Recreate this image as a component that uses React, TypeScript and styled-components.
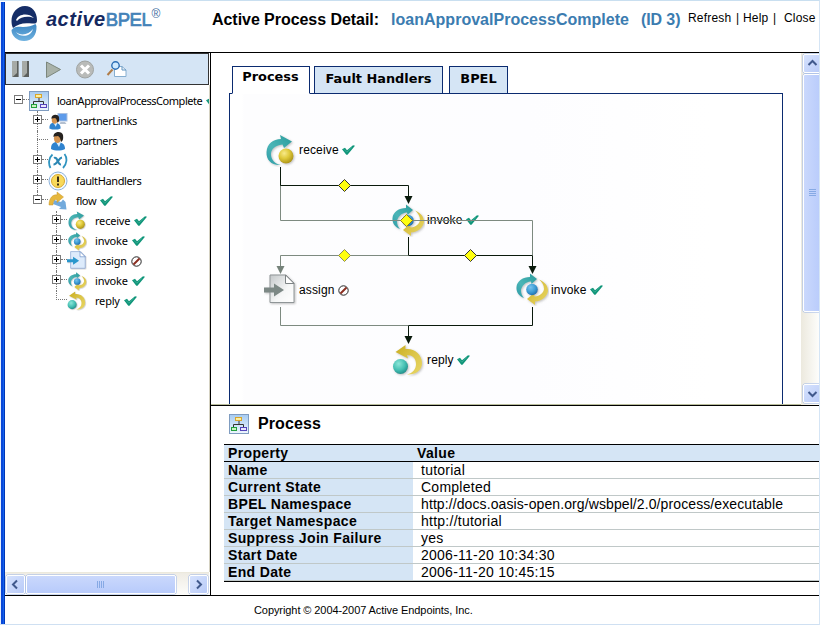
import React from "react";
import styled, { createGlobalStyle, css } from "styled-components";

const Global = createGlobalStyle`
  *, *::before, *::after { box-sizing: border-box; }
  html, body { margin: 0; padding: 0; background: #fff; overflow: hidden; }
  svg { display: block; flex: none; }
`;

const ARIAL = `"Liberation Sans", Arial, sans-serif`;
const PANEL = "#d5e5f5";
const NAVY = "#0b2b70";

const Window = styled.div`
  width: 820px;
  height: 625px;
  display: flex;
  flex-direction: column;
  background: #fff;
  border-top: 1px solid #c9dff0;
  border-bottom: 1px solid #cfe0f2;
  border-right: 1px solid #d5e5f5;
  color: #000;
  font-family: ${ARIAL};
  overflow: hidden;
`;

const Frame = styled.div`
  flex: 1;
  display: flex;
  flex-direction: column;
  min-height: 0;
  border-top: 1px solid #a5b0a8;
  border-left: 5px solid;
  border-image: linear-gradient(90deg, #e4eefb 0 1px, #0a48d8 1px 3px, #1262ee 3px 4px, #0036b8 4px 5px) 0 0 0 5;
`;

const Header = styled.header`
  height: 50px;
  flex: none;
  display: flex;
  align-items: flex-start;
  white-space: pre;
`;

const Logo = styled.div`
  width: 207px;
  display: flex;
  padding: 3px 0 0 5px;
`;

const Brand = styled.div`
  display: flex;
  align-items: flex-start;
  padding: 2px 0 0 6px;
`;

const BrandBold = styled.span`
  font: italic bold 20px/24px ${ARIAL};
  letter-spacing: 0.5px;
  color: #14285f;
`;
const BrandThin = styled.span`
  font-size: 18.5px;
  line-height: 25px;
  color: #4482b8;
  -webkit-text-stroke: 0.7px #4482b8;
  letter-spacing: -0.4px;
`;
const Registered = styled.span`
  font-size: 12px;
  line-height: 12px;
  color: #3c6c9e;
  padding-top: 1px;
`;

const Title = styled.h1`
  margin: 0;
  padding-top: 8px;
  font-size: 16px;
  line-height: 19px;
  font-weight: bold;
  display: flex;
  width: 476px;
`;
const TitleLabel = styled.span`
  width: 179px;
  letter-spacing: -0.05px;
`;
const TitleName = styled.span`
  width: 250px;
  color: #3b7cb0;
  letter-spacing: 0.02px;
`;
const TitleId = styled.span`
  color: #3b7cb0;
  letter-spacing: -0.1px;
`;

const Links = styled.nav`
  display: flex;
  padding-top: 8px;
  font-size: 12px;
  line-height: 16px;
  letter-spacing: 0.2px;
`;
const HeaderLink = styled.a<{ $w: number }>`
  width: ${(p) => p.$w}px;
`;

const Body = styled.div`
  height: 544px;
  flex: none;
  display: flex;
  border-top: 1px solid #000;
  border-bottom: 1px solid #000;
`;

const Sidebar = styled.aside`
  width: 206px;
  flex: none;
  display: flex;
  flex-direction: column;
  border-right: 1px solid #000;
`;

const Toolbar = styled.div`
  height: 32px;
  width: 204px;
  flex: none;
  display: flex;
  align-items: center;
  border: 1px solid #333;
  background: ${PANEL};
`;

const Tree = styled.div`
  flex: 1;
  padding-top: 6px;
  overflow: hidden;
  border-right: 1px solid #d5d2c2;
`;

const TRACKING = [-0.47, -0.38, -0.2];

const Row = styled.div<{ $level: number; $end?: number }>`
  position: relative;
  height: 20px;
  padding-left: ${(p) => 9 + p.$level * 19}px;
  display: flex;
  align-items: center;
  font: 11px/20px "Noto Sans", "Open Sans", sans-serif;
  letter-spacing: ${(p) => TRACKING[p.$level]}px;
  white-space: nowrap;
  ${(p) =>
    p.$level > 0 &&
    css`
      &::before {
        content: "";
        position: absolute;
        left: ${13 + p.$level * 19}px;
        top: 0;
        height: ${p.$end ?? 20}px;
        border-left: 1px dotted #777;
      }
    `}
`;
const ToggleBox = styled.div`
  position: relative;
  width: 9px;
  height: 9px;
  flex: none;
  margin-top: -4px;
`;
const Stub = styled.div<{ $leaf?: boolean }>`
  width: ${(p) => (p.$leaf ? 11 : 6)}px;
  margin-left: ${(p) => (p.$leaf ? 4 : 0)}px;
  margin-top: -3px;
  border-top: 1px dotted #777;
  flex: none;
`;
const IconCell = styled.div`
  width: 20px;
  flex: none;
  display: flex;
  justify-content: center;
  margin-right: 8px;
`;
const Status = styled.span`
  margin-left: 4px;
  flex: none;
`;

const HScroll = styled.div`
  height: 23px;
  width: 204px;
  flex: none;
  display: flex;
  align-items: center;
  padding: 2px 1px 1px;
  background: linear-gradient(#efece4, #fdfdfb);
  border-top: 1px solid #ece9dd;
`;
const scrollPart = css`
  background: linear-gradient(135deg, #d6e2fd, #b9cbf8);
  border: 1px solid #fff;
  border-radius: 2px;
  box-shadow: 0 0 0 0.5px #9ab4e6;
  display: flex;
  align-items: center;
  justify-content: center;
  flex: none;
`;
const ScrollButton = styled.div`
  ${scrollPart}
  width: 19px;
  height: 19px;
`;
const HThumb = styled.div`
  ${scrollPart}
  background: linear-gradient(#cad8fc, #b8cbfb);
  width: 150px;
  height: 19px;
  margin: 0 13px 0 1px;
`;
const VScroll = styled.div`
  width: 18px;
  flex: none;
  padding: 1px 0 2px 2px;
  display: flex;
  flex-direction: column;
  background: linear-gradient(90deg, #ece9de, #fdfdfb);
  overflow: hidden;
`;
const VThumb = styled.div`
  ${scrollPart}
  background: linear-gradient(90deg, #cad8fc, #b8cbfb);
  width: 19px;
  height: 238px;
  margin: 1px 0 72px;
`;

const Main = styled.main`
  flex: 1;
  min-width: 0;
  display: flex;
  flex-direction: column;
`;
const Upper = styled.section`
  height: 353px;
  flex: none;
  display: flex;
  border-bottom: 1px solid #000;
  box-shadow: inset 0 -1px 0 #b9bd9c;
`;
const TabArea = styled.div`
  width: 590px;
  flex: none;
  padding: 13px 0 1px 18px;
  display: flex;
  flex-direction: column;
`;
const Tabs = styled.div`
  display: flex;
  height: 28px;
  padding-left: 3px;
  position: relative;
  z-index: 1;
`;
const Tab = styled.button<{ $w: number; $gap: number; $active?: boolean }>`
  width: ${(p) => p.$w}px;
  height: 28px;
  margin: 0 ${(p) => p.$gap}px 0 0;
  padding: ${(p) => (p.$active ? "0 1px 6px 0" : "0 0 2px")};
  border: 1px solid ${NAVY};
  border-bottom-color: ${(p) => (p.$active ? "#fff" : NAVY)};
  background: ${(p) => (p.$active ? "#fff" : PANEL)};
  font: bold 12.9px/18px "DejaVu Sans", Verdana, sans-serif;
  color: #000;
`;
const Canvas = styled.div`
  position: relative;
  width: 554px;
  flex: 1;
  margin-top: -1px;
  border: 1px solid ${NAVY};
  border-bottom: 0;
  background: linear-gradient(90deg, #fff 12px, #fdfdfe 14px, #fdfdff 300px, #fff 480px);
`;
const Layer = styled.div<{ $x: number; $y: number }>`
  position: absolute;
  left: ${(p) => p.$x - 230}px;
  top: ${(p) => p.$y - 94}px;
`;
const NodeLabel = styled(Layer)`
  display: flex;
  align-items: center;
  gap: 3px;
  height: 16px;
  font-size: 12px;
  line-height: 16px;
  letter-spacing: 0.15px;
`;

const Details = styled.section`
  flex: 1;
  padding: 8px 0 0 13px;
`;
const DetailsTitle = styled.h2`
  margin: 0;
  height: 30px;
  display: flex;
  align-items: flex-start;
  padding-left: 5px;
  gap: 9px;
  font-size: 16px;
  line-height: 19px;
  letter-spacing: 0.1px;
`;
const Table = styled.div`
  border-top: 1px solid #000;
  border-bottom: 1px solid #000;
  font-size: 14px;
`;
const TableHead = styled.div`
  display: flex;
  height: 17px;
  line-height: 17px;
  background: ${PANEL};
  border-bottom: 1px solid #000;
  font-weight: bold;
  letter-spacing: 0.35px;
`;
const TableRow = styled.div`
  display: flex;
  height: 17px;
  line-height: 17px;
  border-bottom: 1px solid #c0c8c8;
`;
const Key = styled.div`
  width: 189px;
  padding-left: 4px;
  background: ${PANEL};
  font-weight: bold;
  letter-spacing: 0.35px;
`;
const HeadKey = styled.div`
  width: 193px;
  padding-left: 4px;
`;
const Value = styled.div<{ $tight?: boolean }>`
  padding-left: 8px;
  letter-spacing: ${(p) => (p.$tight ? 0.1 : 0.25)}px;
`;
const Footer = styled.footer`
  flex: 1;
  padding: 7px 0 0 249px;
  font-size: 11px;
  line-height: 15px;
  letter-spacing: -0.08px;
`;

const Swirl = () => (
  <svg width="30" height="38" viewBox="0 0 30 38">
    <defs>
      <linearGradient id="swirlLow" x1="0" y1="0" x2="0" y2="1">
        <stop offset="0" stopColor="#3c86c2" /><stop offset="1" stopColor="#6fb2e0" />
      </linearGradient>
    </defs>
    <path d="M1.500 16C1.500 8 7 1 15 1C22 1 27 7 27 15C27 18 26 19 22 18.500C14 17.500 8 18.500 3 23C2 21 1.500 19 1.500 16Z" fill="#152d66" />
    <path d="M6 15C8 9 18 7 24 13C19 11 11 11 7 16Z" fill="#fff" />
    <path d="M26.500 21C27 30 22 36 14 36C7 36 1.500 31 1.500 25C6 20.500 8 22 13 22C18 22 22 21 25.500 19Z" fill="url(#swirlLow)" />
    <path d="M6 27C10 31 19 30 23 24C21 32 10 33 6 27Z" fill="#fff" />
  </svg>
);

const Check = () => (
  <svg width="13" height="10" viewBox="0 0 13 10">
    <path d="M0 4.300L3 2.800L5 5.300L11 .3L13 .8L5.500 9.800H4.300Z" fill="#0f9579" />
    <path d="M2 4.400L4.800 7.200L10 2.300" fill="none" stroke="#52b9a2" strokeWidth=".6" />
  </svg>
);
const Skip = () => (
  <svg width="11" height="11" viewBox="0 0 11 11">
    <circle cx="5.5" cy="5.5" r="4.7" fill="#fff" stroke="#222" />
    <path d="M2.500 8.500L8.500 2.500" stroke="#8b2e20" strokeWidth="2" />
  </svg>
);

const DefsSvg = styled.svg`
  position: absolute;
`;
const Defs = () => (
  <DefsSvg width="0" height="0">
    <defs>
      <radialGradient id="yellowBall" cx=".38" cy=".32" r=".7">
        <stop offset="0" stopColor="#f8ea8a" /><stop offset=".5" stopColor="#dfc93a" /><stop offset="1" stopColor="#ac9418" />
      </radialGradient>
      <radialGradient id="tealBall" cx=".38" cy=".32" r=".7">
        <stop offset="0" stopColor="#8ce6d8" /><stop offset=".6" stopColor="#45c0b3" /><stop offset="1" stopColor="#238f8b" />
      </radialGradient>
      <radialGradient id="blueBall" cx=".38" cy=".32" r=".7">
        <stop offset="0" stopColor="#78c3ee" /><stop offset=".6" stopColor="#3b9bd4" /><stop offset="1" stopColor="#2270ad" />
      </radialGradient>
      <linearGradient id="tealArc" x1="1" y1="0" x2="0" y2="1">
        <stop offset="0" stopColor="#2a9c9c" /><stop offset=".6" stopColor="#4bb5b7" /><stop offset="1" stopColor="#2b9aa6" />
      </linearGradient>
      <linearGradient id="goldArc" x1="0" y1="0" x2="1" y2="1">
        <stop offset="0" stopColor="#c8ad20" /><stop offset=".5" stopColor="#dcc548" /><stop offset="1" stopColor="#e8d766" />
      </linearGradient>
      <linearGradient id="tile" x1="0" y1="0" x2="0" y2="1">
        <stop offset="0" stopColor="#a6cbf1" /><stop offset="1" stopColor="#eef6fd" />
      </linearGradient>
      <linearGradient id="paper" x1="0" y1="0" x2="1" y2="1">
        <stop offset="0" stopColor="#c4c8ca" /><stop offset=".6" stopColor="#f6f7f7" /><stop offset="1" stopColor="#fff" />
      </linearGradient>
      <filter id="soft" x="-20%" y="-20%" width="150%" height="150%">
        <feDropShadow dx="1" dy="1" stdDeviation=".8" floodColor="#777" floodOpacity=".45" />
      </filter>
    </defs>
  </DefsSvg>
);

type IconProps = { size?: number };

const ReceiveIcon = ({ size = 33 }: IconProps) => (
  <svg width={size} height={size} viewBox="0 0 33 33">
    <g filter="url(#soft)">
      <path d="M16 1L28 7.500L20 14L18.500 10.500C11 11 6.500 16 7 21C7.500 26 11 30 17 31C8 32 2 26 2.500 18C3 10 9 5 17 5Z" fill="url(#tealArc)" />
      <circle cx="22" cy="22" r="7.5" fill="url(#yellowBall)" />
    </g>
  </svg>
);
const InvokeIcon = ({ size = 33 }: IconProps) => (
  <svg width={size} height={size} viewBox="0 0 33 33">
    <g filter="url(#soft)">
      <path d="M14 .5L21 6L15.500 11L15 8.500C9 9 6 13 5 17C5 20 6 23 8 25C3 23 0 19 .5 14C1 8 7 4 14 4Z" fill="url(#tealArc)" />
      <path d="M23 6.500C29 9 32 13 32 18C31 24 26 28 19 28.500V32L11 26L18 20L18.500 23.500C24 23 27.500 20 28 16C28 12 26 9 23 6.500Z" fill="url(#goldArc)" />
      <circle cx="16" cy="16.500" r="5.8" fill="url(#blueBall)" />
    </g>
  </svg>
);
const ReplyIcon = ({ size = 33 }: IconProps) => (
  <svg width={size} height={size} viewBox="0 0 33 33">
    <g filter="url(#soft)">
      <path d="M3.500 8L13.500 1V5C22 4 30 10 30 19C30 27 23 31 15 30.500C21 29 24 25 24 20C24 14 20 11 15 11L16 14.500Z" fill="url(#goldArc)" />
      <circle cx="8.5" cy="22.5" r="7.5" fill="url(#tealBall)" />
    </g>
  </svg>
);
const AssignIcon = ({ size = 33, blue = false }: IconProps & { blue?: boolean }) => (
  <svg width={size} height={size} viewBox="0 0 33 33">
    <g filter="url(#soft)">
      <path d="M6 1H22L30 9V28.500H6Z" fill={blue ? "#ddebfb" : "url(#paper)"} stroke={blue ? "#7f9fd0" : "#8f9597"} />
      <path d="M21.500 1V9.500H30Z" fill="#fff" stroke={blue ? "#5b83c2" : "#7d8385"} />
      <path d="M0 13.500H10V9.500L20 16L10 22.500V18.500H0Z" fill={blue ? "#2a97cc" : "#7c8885"} />
    </g>
  </svg>
);

const ProcessIcon = ({ size = 20 }: IconProps) => (
  <svg width={size} height={size} viewBox="0 0 20 20">
    <rect x=".5" y=".5" width="19" height="19" fill="url(#tile)" stroke="#7f9cc0" />
    <path d="M10 7V10.500M4.500 13V10.500H14.500V13" fill="none" stroke="#333" />
    <rect x="6.500" y="3.500" width="6" height="3" fill="#fdf0a0" stroke="#d9a52c" />
    <rect x="2.500" y="13.500" width="5" height="3" fill="#c9f2c0" stroke="#22a03c" />
    <rect x="11.500" y="13.500" width="6" height="3" fill="#eae6ff" stroke="#5545bb" />
  </svg>
);
const PersonShape = () => (
  <>
    <path d="M3 18C3 13 5 11 9 11C14 11 17 13 17 18C13 20 7 20 3 18Z" fill="#2f83cf" />
    <path d="M8 11L11 16L13 11Z" fill="#d8edff" />
    <ellipse cx="9.500" cy="7.500" rx="3.600" ry="4.600" fill="#d3924f" />
    <path d="M5.500 6C5 0 14-.5 15 4C15.500 8 15 10 13 11C12.500 8 12 6 10 5C8 5.500 7 5 5.500 6Z" fill="#26221f" />
  </>
);
const PartnersIcon = () => (
  <svg width="20" height="20" viewBox="0 0 20 20"><PersonShape /></svg>
);
const PartnerLinksIcon = () => (
  <svg width="20" height="20" viewBox="0 0 20 20">
    <rect x="10" y="2.500" width="9" height="7.500" fill="#5e9bea" stroke="#a9bfdf" />
    <path d="M12.500 11H17L18.500 13H11.500Z" fill="#b4c0d0" />
    <g transform="translate(-1 3) scale(.8)"><PersonShape /></g>
  </svg>
);
const VariablesIcon = () => (
  <svg width="20" height="20" viewBox="0 0 20 20">
    <path d="M4.500 3.500C.5 7 .2 13 2.500 17M16.500 3C19.500 7 19 13 15 17" fill="none" stroke="#2f94c0" strokeWidth="1.800" />
    <path d="M6 7C9.500 5 9.500 14 13 13.500M14 6.500C10.500 7 9.500 13.500 5.500 13.500" fill="none" stroke="#2b87b4" strokeWidth="2.100" />
  </svg>
);
const FaultIcon = () => (
  <svg width="20" height="20" viewBox="0 0 20 20">
    <circle cx="10" cy="10" r="9" fill="#f4f9fe" stroke="#8db3dc" />
    <circle cx="10" cy="10" r="6.500" fill="#f8d95b" stroke="#d9a92a" />
    <path d="M10 5.500V11M10 12.500V14.500" stroke="#3a2c10" strokeWidth="2" />
  </svg>
);
const FlowIcon = () => (
  <svg width="20" height="20" viewBox="0 0 20 20">
    <path d="M6 9L13 11L15 8.500L17.500 11L18.500 18.500L11 18L13 16L5 13Z" fill="#72aadc" />
    <path d="M1 14C1 7 5 3 9 4V1L15.500 6L9 11.500V8.500C6 8 5 11 5 14Z" fill="#e6b73c" stroke="#c9962a" strokeWidth=".5" />
  </svg>
);

const ToolIcons = () => (
  <svg width="202" height="30" viewBox="6 54 202 30">
    <path d="M12 61H18.500V77H12ZM22 61H29V77H22Z" fill="#a6aaa6" />
    <path d="M17 61H18.500V77H12.500L17 73ZM27 61H29V77H23L27 73Z" fill="#5b5f5d" />
    <path d="M46.500 62L60.500 69.500L46.500 77.500Z" fill="#a9b2a9" stroke="#7c877c" />
    <circle cx="85" cy="69.500" r="8.500" fill="#b9bbb9" stroke="#9fa3a1" />
    <path d="M81 65.500L89 73.500M89 65.500L81 73.500" stroke="#fff" strokeWidth="3" />
    <path d="M114.500 66.500H122L126 70V76.500H114.500Z" fill="#fff" stroke="#86aed0" />
    <path d="M122 66.500V70H126" fill="none" stroke="#5f93c0" />
    <path d="M107.500 75L112.500 69.500" stroke="#b07c47" strokeWidth="2" />
    <circle cx="115.500" cy="65.500" r="3.700" fill="#cfeaff" stroke="#2b6db4" strokeWidth="1.400" />
  </svg>
);

const Toggle = ({ open }: { open?: boolean }) => (
  <ToggleBox>
    <svg width="9" height="9" viewBox="0 0 9 9">
      <rect x=".5" y=".5" width="8" height="8" fill="#fff" stroke="#7b7b7b" />
      <path d={open ? "M2 4.500H7" : "M2 4.500H7M4.500 2V7"} stroke="#000" />
    </svg>
  </ToggleBox>
);

const Chevron = ({ dir }: { dir: "left" | "right" | "up" | "down" }) => {
  const d = { left: "M7 1.500L3 5.500L7 9.500", right: "M4 1.500L8 5.500L4 9.500", up: "M1.500 7L5.500 3L9.500 7", down: "M1.500 4L5.500 8L9.500 4" }[dir];
  return (
    <svg width="11" height="11" viewBox="0 0 11 11">
      <path d={d} fill="none" stroke="#41598c" strokeWidth="2" />
    </svg>
  );
};

type Item = { level: number; label: string; icon: React.ReactNode; toggle?: "open" | "closed"; status?: "done" | "skipped"; end?: number };
const items: Item[] = [
  { level: 0, label: "loanApprovalProcessComplete", icon: <ProcessIcon />, toggle: "open", status: "done" },
  { level: 1, label: "partnerLinks", icon: <PartnerLinksIcon />, toggle: "closed" },
  { level: 1, label: "partners", icon: <PartnersIcon /> },
  { level: 1, label: "variables", icon: <VariablesIcon />, toggle: "closed" },
  { level: 1, label: "faultHandlers", icon: <FaultIcon />, toggle: "closed" },
  { level: 1, label: "flow", icon: <FlowIcon />, toggle: "open", status: "done", end: 8 },
  { level: 2, label: "receive", icon: <ReceiveIcon size={20} />, toggle: "closed", status: "done" },
  { level: 2, label: "invoke", icon: <InvokeIcon size={19} />, toggle: "closed", status: "done" },
  { level: 2, label: "assign", icon: <AssignIcon size={20} blue />, toggle: "closed", status: "skipped" },
  { level: 2, label: "invoke", icon: <InvokeIcon size={19} />, toggle: "closed", status: "done" },
  { level: 2, label: "reply", icon: <ReplyIcon size={20} />, status: "done", end: 9 },
];

const properties = [
  ["Name", "tutorial"],
  ["Current State", "Completed"],
  ["BPEL Namespace", "http://docs.oasis-open.org/wsbpel/2.0/process/executable"],
  ["Target Namespace", "http://tutorial"],
  ["Suppress Join Failure", "yes"],
  ["Start Date", "2006-11-20 10:34:30"],
  ["End Date", "2006-11-20 10:45:15"],
];

const diamonds = [
  { x: 344.5, y: 185.5, stroke: "#333" },
  { x: 406.5, y: 220.5, stroke: "#8c7a20" },
  { x: 344.5, y: 255.5, stroke: "#8b8b60" },
  { x: 470.5, y: 255.5, stroke: "#333" },
];

const Connectors = () => (
  <svg width="550" height="309" viewBox="230 94 550 309">
    <g fill="none" stroke="#7d8a80">
      <path d="M280.500 185V220.500H532.500V255M408 255.500H280.500V267M280.500 307V325.500H408" />
    </g>
    <g fill="none" stroke="#0a1a0c">
      <path d="M280.500 167V185.500H408.500V197M408.500 237V255.500H532.500V267M532.500 307V325.500H408.500V337" />
    </g>
    <path d="M276.500 266H284.500L280.500 274Z" fill="#75827a" />
    <path d="M404.500 196H412.500L408.500 204ZM528.500 266H536.500L532.500 274ZM404.500 336H412.500L408.500 344Z" fill="#0a1a0c" />
    {diamonds.map(({ x, y, stroke }) => (
      <path key={`${x}-${y}`} d={`M${x - 6} ${y}L${x} ${y - 6}L${x + 6} ${y}L${x} ${y + 6}Z`} fill="#ffff10" stroke={stroke} />
    ))}
  </svg>
);

const nodes = [
  { x: 264, y: 134, label: "receive", lx: 299, ly: 142, icon: <ReceiveIcon />, status: "done" },
  { x: 392, y: 204, label: "invoke", lx: 427, ly: 212, icon: <InvokeIcon />, status: "done" },
  { x: 264, y: 274, label: "assign", lx: 299, ly: 282, icon: <AssignIcon />, status: "skipped" },
  { x: 516, y: 273, label: "invoke", lx: 551, ly: 282, icon: <InvokeIcon />, status: "done" },
  { x: 392, y: 344, label: "reply", lx: 427, ly: 352, icon: <ReplyIcon />, status: "done" },
];

export default function App() {
  return (
    <Window>
      <Global />
      <Defs />
      <Frame>
        <Header>
          <Logo>
            <Swirl />
            <Brand>
              <BrandBold>active</BrandBold>
              <BrandThin>BPEL</BrandThin>
              <Registered>®</Registered>
            </Brand>
          </Logo>
          <Title>
            <TitleLabel>Active Process Detail:</TitleLabel>
            <TitleName>loanApprovalProcessComplete</TitleName>
            <TitleId>(ID 3)</TitleId>
          </Title>
          <Links>
            <HeaderLink $w={48}>Refresh</HeaderLink>
            <HeaderLink $w={7}>|</HeaderLink>
            <HeaderLink $w={30}>Help</HeaderLink>
            <HeaderLink $w={11}>|</HeaderLink>
            <HeaderLink $w={34}>Close</HeaderLink>
          </Links>
        </Header>
        <Body>
          <Sidebar>
            <Toolbar><ToolIcons /></Toolbar>
            <Tree>
              {items.map((it, i) => (
                <Row key={i} $level={it.level} $end={it.end}>
                  {it.toggle && <Toggle open={it.toggle === "open"} />}
                  <Stub $leaf={!it.toggle} />
                  <IconCell>{it.icon}</IconCell>
                  {it.label}
                  {it.status && <Status>{it.status === "done" ? <Check /> : <Skip />}</Status>}
                </Row>
              ))}
            </Tree>
            <HScroll>
              <ScrollButton><Chevron dir="left" /></ScrollButton>
              <HThumb>
                <svg width="8" height="7"><path d="M.5 0V7M2.500 0V7M4.500 0V7M6.500 0V7" stroke="#86a9e4" /></svg>
              </HThumb>
              <ScrollButton><Chevron dir="right" /></ScrollButton>
            </HScroll>
          </Sidebar>
          <Main>
            <Upper>
              <TabArea>
                <Tabs>
                  <Tab $w={78} $gap={4} $active>Process</Tab>
                  <Tab $w={129} $gap={6}>Fault Handlers</Tab>
                  <Tab $w={59} $gap={0}>BPEL</Tab>
                </Tabs>
                <Canvas>
                  {nodes.map((n, i) => (
                    <React.Fragment key={i}>
                      <Layer $x={n.x} $y={n.y}>{n.icon}</Layer>
                      <NodeLabel $x={n.lx} $y={n.ly}>
                        {n.label}
                        {n.status === "done" ? <Check /> : <Skip />}
                      </NodeLabel>
                    </React.Fragment>
                  ))}
                  <Layer $x={230} $y={94}><Connectors /></Layer>
                </Canvas>
              </TabArea>
              <VScroll>
                <ScrollButton><Chevron dir="up" /></ScrollButton>
                <VThumb>
                  <svg width="7" height="8"><path d="M0 .5H7M0 2.500H7M0 4.500H7M0 6.500H7" stroke="#86a9e4" /></svg>
                </VThumb>
                <ScrollButton><Chevron dir="down" /></ScrollButton>
              </VScroll>
            </Upper>
            <Details>
              <DetailsTitle><ProcessIcon />Process</DetailsTitle>
              <Table>
                <TableHead><HeadKey>Property</HeadKey><div>Value</div></TableHead>
                {properties.map(([k, v]) => (
                  <TableRow key={k}><Key>{k}</Key><Value $tight={v.length > 40}>{v}</Value></TableRow>
                ))}
              </Table>
            </Details>
          </Main>
        </Body>
        <Footer>Copyright © 2004-2007 Active Endpoints, Inc.</Footer>
      </Frame>
    </Window>
  );
}
